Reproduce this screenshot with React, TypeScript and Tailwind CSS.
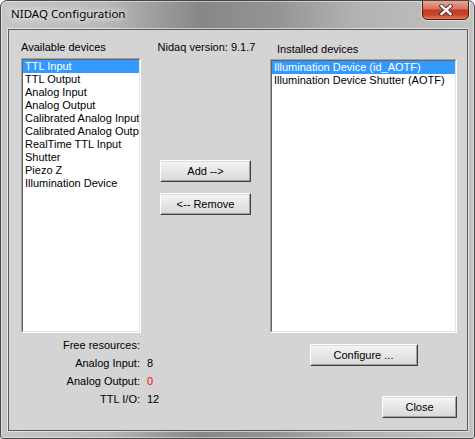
import React from 'react'

const availableDevices = [
  'TTL Input',
  'TTL Output',
  'Analog Input',
  'Analog Output',
  'Calibrated Analog Input',
  'Calibrated Analog Output',
  'RealTime TTL Input',
  'Shutter',
  'Piezo Z',
  'Illumination Device',
]

const installedDevices = ['Illumination Device (id_AOTF)', 'Illumination Device Shutter (AOTF)']

const resources = [
  { label: 'Analog Input:', value: '8', red: false },
  { label: 'Analog Output:', value: '0', red: true },
  { label: 'TTL I/O:', value: '12', red: false },
]

function ListBox({ items, selected, className }: { items: string[]; selected: number; className: string }) {
  return (
    <div className={`border border-t-[#a0a0a0] border-l-[#a0a0a0] border-r-white border-b-white ${className}`}>
      <div className="h-full border border-t-[#646464] border-l-[#646464] border-r-[#e3e3e3] border-b-[#e3e3e3] bg-white overflow-hidden">
        {items.map((item, i) => (
          <div
            key={item}
            className={`h-[13px] leading-[13px] pl-[2px] whitespace-nowrap ${
              i === selected ? 'bg-[#3399ff] text-white' : 'text-black'
            }`}
          >
            {item}
          </div>
        ))}
      </div>
    </div>
  )
}

function Btn({ children, className }: { children: React.ReactNode; className: string }) {
  return (
    <button
      type="button"
      className={`block border border-t-white border-l-white border-r-[#404040] border-b-[#404040] p-0 ${className}`}
    >
      <div className="h-full flex items-center justify-center border border-t-transparent border-l-transparent border-r-[#a0a0a0] border-b-[#a0a0a0] bg-[linear-gradient(#f4f4f4,#e6e6e6_50%,#d9d9d9)] text-black">
        {children}
      </div>
    </button>
  )
}

export default function App() {
  return (
    <div className="w-[475px] h-[439px] flex flex-col border border-[#474747] rounded-t-[7px] rounded-b-[3px] overflow-hidden bg-[linear-gradient(90deg,#c6c6c6_0%,#b8b8b8_22%,#878787_42%,#949494_58%,#b2b2b2_75%,#c2c2c2_100%)] shadow-[inset_0_0_0_1px_rgba(255,255,255,0.45)]">
      {/* Title bar */}
      <div className="h-[28px] flex justify-between items-start shrink-0">
        <div
          className="pl-[10px] pt-[5px] text-[11.5px] leading-[16px] text-black [text-shadow:0_0_6px_#ffffff,0_0_10px_#ffffff]"
          style={{ fontFamily: '"Noto Sans", "Open Sans", sans-serif' }}
        >
          NIDAQ Configuration
        </div>
        <div className="mr-[5px] w-[47px] h-[20px] -mt-px flex items-center justify-center rounded-b-[5px] border border-[#4d1c12] bg-[linear-gradient(#eaa597,#d9745f_42%,#c23b23_52%,#c9462c_78%,#e27d5f)] shadow-[0_0_0_1px_rgba(255,255,255,0.45)]">
          <svg width="14" height="12" viewBox="0 0 14 12">
            <path d="M2.5 2 L11.5 10 M11.5 2 L2.5 10" stroke="#3a2a2a" strokeWidth="4.2" strokeLinecap="square" />
            <path d="M2.5 2 L11.5 10 M11.5 2 L2.5 10" stroke="#ffffff" strokeWidth="2.4" strokeLinecap="square" />
          </svg>
        </div>
      </div>

      {/* Client area */}
      <div
        className="flex-1 ml-[7px] mr-[6px] mb-[7px] border border-[#5a5a5a] bg-[#d4d4d4] shadow-[0_0_0_1px_rgba(255,255,255,0.55)] flex pl-[12px] pr-[10px] pt-[11px] text-[11px] leading-[13px] text-black"
        style={{ fontFamily: '"Liberation Sans", Arial, sans-serif' }}
      >
        {/* Left column */}
        <div className="w-[120px] flex flex-col">
          <div className="h-[13px]">Available devices</div>
          <ListBox items={availableDevices} selected={0} className="mt-[4px] h-[275px] w-[120px]" />
          <div className="mt-[3px] grid grid-cols-[119px_40px] gap-x-[7px] leading-[18px]">
            <div className="text-right whitespace-nowrap">Free resources:</div>
            <div />
            {resources.map((r) => (
              <React.Fragment key={r.label}>
                <div className="text-right whitespace-nowrap">{r.label}</div>
                <div className={r.red ? 'text-[#ff0000]' : ''}>{r.value}</div>
              </React.Fragment>
            ))}
          </div>
        </div>

        {/* Middle column */}
        <div className="flex-1 flex flex-col items-center">
          <div className="h-[13px] whitespace-nowrap pl-[2px]">Nidaq version: 9.1.7</div>
          <Btn className="mt-[106px] w-[91px] h-[22px]">Add --&gt;</Btn>
          <Btn className="mt-[11px] w-[91px] h-[22px]">&lt;-- Remove</Btn>
        </div>

        {/* Right column */}
        <div className="w-[187px] flex flex-col">
          <div className="h-[13px] mt-[2px] pl-[7px]">Installed devices</div>
          <ListBox items={installedDevices} selected={0} className="mt-[3px] h-[274px] w-[187px]" />
          <Btn className="mt-[11px] self-center w-[108px] h-[22px]">Configure ...</Btn>
          <Btn className="mt-[30px] self-end w-[75px] h-[22px]">Close</Btn>
        </div>
      </div>
    </div>
  )
}
